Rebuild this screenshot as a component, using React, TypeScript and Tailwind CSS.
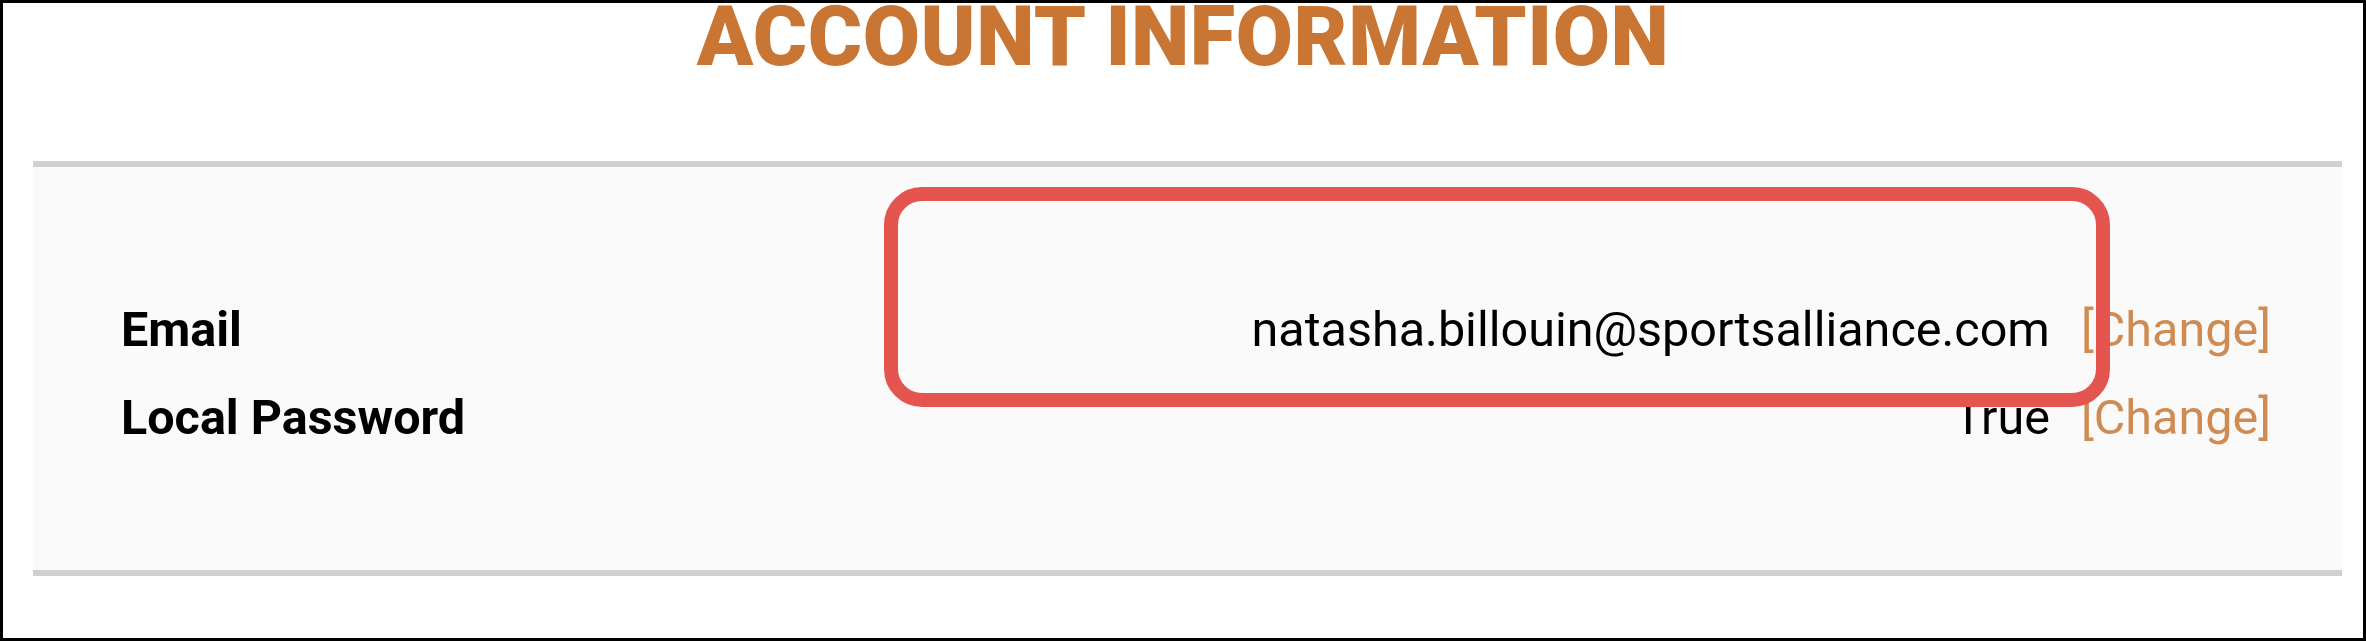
export default function App() {
  const rows = [
    { label: "Email", value: "natasha.billouin@sportsalliance.com" },
    { label: "Local Password", value: "True" },
  ];

  return (
    <div className="relative h-[641px] w-[2366px] overflow-hidden border-[3px] border-black bg-white font-['Roboto',sans-serif] text-black">
      <h1 className="mt-[3px] text-center text-[83px] font-black leading-[62px] tracking-[0.5px] text-[#c97534]">
        ACCOUNT INFORMATION
      </h1>

      <section className="ml-[30px] mr-[21px] mt-[93px] h-[415px] border-y-[6px] border-[#d0d0d0] bg-[#fafafa] pl-[88px] pr-[71px] pt-[134px]">
        <div className="flex flex-col gap-[30px]">
          {rows.map((row) => (
            <div key={row.label} className="flex items-baseline justify-between text-[48.5px] leading-[58px]">
              <span className="font-bold">{row.label}</span>
              <span className="flex items-baseline gap-[31px]">
                <span>{row.value}</span>
                <a href="#" className="text-[#d08b52]">
                  [Change]
                </a>
              </span>
            </div>
          ))}
        </div>
      </section>

      <div className="absolute left-[881px] top-[184px] h-[220px] w-[1226px] rounded-[38px] border-[14px] border-[#e4554f]" />
    </div>
  );
}
